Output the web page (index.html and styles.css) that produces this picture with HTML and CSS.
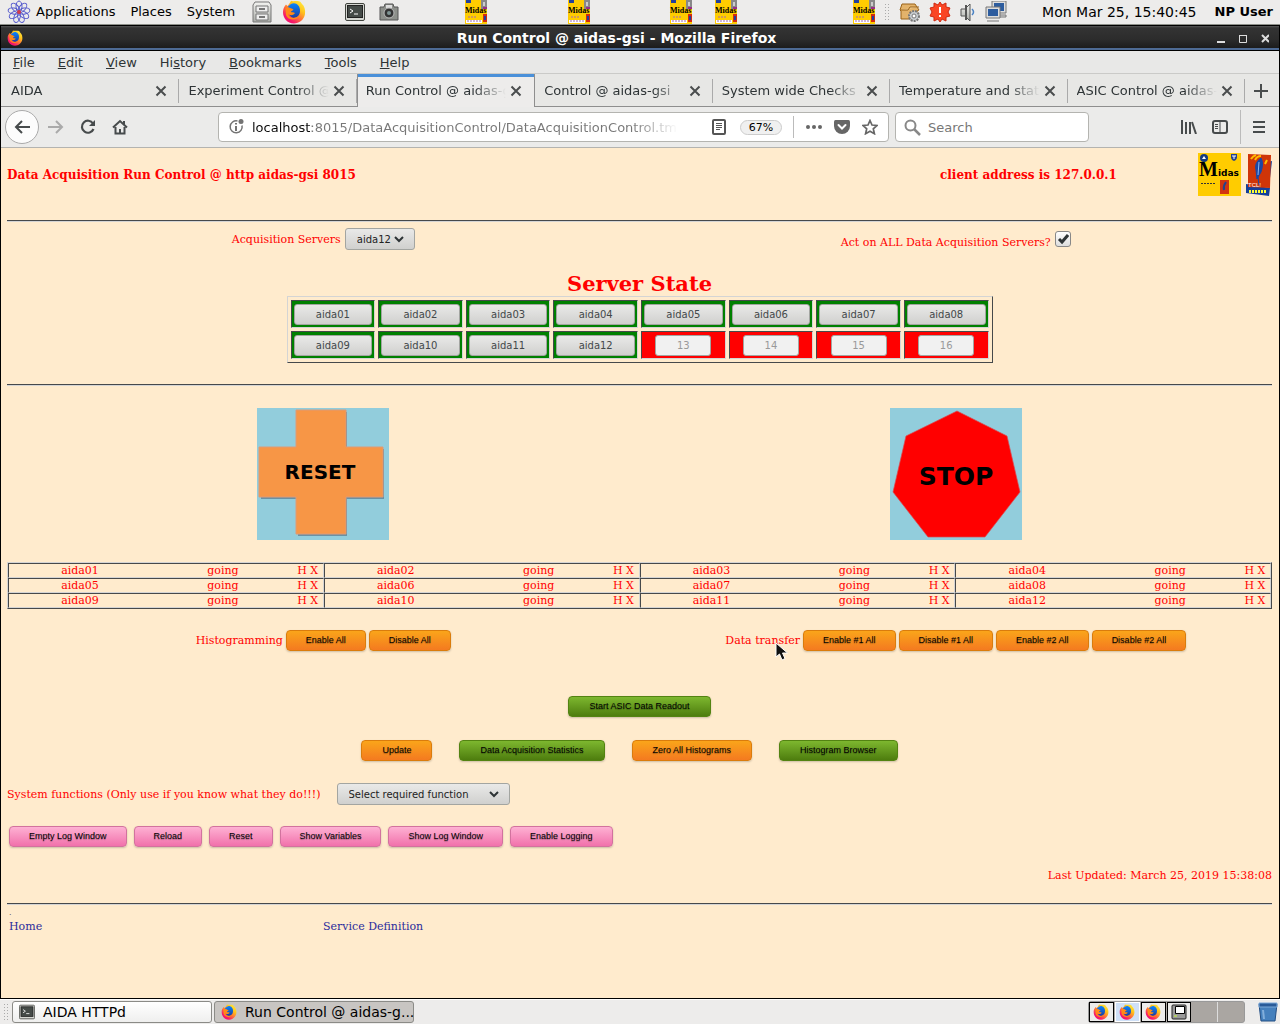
FILE: index.html
```html
<!DOCTYPE html>
<html lang="en">
<head>
<meta charset="utf-8">
<title>Run Control @ aidas-gsi</title>
<link rel="stylesheet" href="styles.css">
</head>
<body>
<svg class="defs" aria-hidden="true">
  <defs>
    <linearGradient id="flame" x1="1" y1="0" x2="0.2" y2="1">
      <stop offset="0" stop-color="#fff44f"/><stop offset="0.35" stop-color="#ffc51b"/>
      <stop offset="0.6" stop-color="#ff7139"/><stop offset="0.85" stop-color="#f5156c"/>
    </linearGradient>
    <linearGradient id="globe" x1="0" y1="0" x2="0" y2="1">
      <stop offset="0" stop-color="#0a84ff"/><stop offset="1" stop-color="#1b3f9c"/>
    </linearGradient>
    <linearGradient id="metal" x1="0" y1="0" x2="0" y2="1">
      <stop offset="0" stop-color="#f4f4f2"/><stop offset="1" stop-color="#a9aba6"/>
    </linearGradient>
    <symbol id="firefox" viewBox="0 0 24 24">
      <path d="M4 4.500L5.500 6C7 4.500 8 3 9 .8C11 2 16 0 18.500 2L20 4C22.500 6 23.500 10 23 14C22 20 17 23.500 12 23.500C5 23.500 1 18 1 12C1 9 2 7 4 4.500Z" fill="url(#flame)"/>
      <path d="M9 4C13 1.500 18.500 5 18 11C18 16 14 18.500 10.500 17.500C7.500 16.500 6.500 13 8 10.500L6 6.500Z" fill="url(#globe)"/>
      <path d="M3.500 8C7 6.500 9 8 11.500 9.500C11 11 9 10.500 9 12C10 12.500 11.500 12 13 13C11 16 7 15.500 6 13.500C7 19 14 19.500 17.500 15C16 21 6 21 4 15Z" fill="#ff8a16"/>
    </symbol>
    <symbol id="term" viewBox="0 0 20 18">
      <rect x=".5" y=".5" width="19" height="17" rx="1.500" fill="#d5d7d2" stroke="#41443f"/>
      <rect x="2.500" y="2.500" width="15" height="12" fill="#454b48" stroke="#222"/>
      <path d="M5 6l3 2-3 2M9 11h4" fill="none" stroke="#fff"/>
    </symbol>
    <symbol id="midas-mini" viewBox="0 0 24 24">
      <path fill="#fc0" d="M1 0h22v24H1z"/><path fill="#888" d="M17 0h6v9h-6z"/><path fill="#ccc" d="M19 2h2v4h-2z"/>
      <path fill="#24409c" d="M2 0h5v3H2z"/><path fill="#9b2c88" d="M19 7h4v2h-4z"/>
      <text x="1" y="13" class="mini-text">Midas</text>
      <path fill="#d32a10" d="M19 14h4v8h-4z"/><path fill="#24409c" d="M20 16h2v4h-2z"/>
      <path fill="#fff" d="M2 20h16v3H2z"/><path d="M3 21h14M4 17h8" stroke="#a26ab7" stroke-dasharray="2 1"/>
    </symbol>
    <symbol id="close" viewBox="0 0 12 12"><path d="M1.500 1.500l9 9m0-9l-9 9" stroke="#4a4d4e" stroke-width="2" fill="none"/></symbol>
  </defs>
</svg>

<header class="panel">
  <nav class="panel-menu">
    <svg width="24" height="24" viewBox="0 0 24 24"><g fill="none" stroke="#5358cc" stroke-width="1"><ellipse cx="12" cy="6.500" rx="3" ry="5.500"/><ellipse cx="12" cy="6.500" rx="3" ry="5.500" transform="rotate(40 12 12)"/><ellipse cx="12" cy="6.500" rx="3" ry="5.500" transform="rotate(80 12 12)"/><ellipse cx="12" cy="6.500" rx="3" ry="5.500" transform="rotate(120 12 12)"/><ellipse cx="12" cy="6.500" rx="3" ry="5.500" transform="rotate(160 12 12)"/><ellipse cx="12" cy="6.500" rx="3" ry="5.500" transform="rotate(200 12 12)"/><ellipse cx="12" cy="6.500" rx="3" ry="5.500" transform="rotate(240 12 12)"/><ellipse cx="12" cy="6.500" rx="3" ry="5.500" transform="rotate(280 12 12)"/><ellipse cx="12" cy="6.500" rx="3" ry="5.500" transform="rotate(320 12 12)"/></g><circle cx="12" cy="12" r="2" fill="#d23b4b"/></svg>
    <button>Applications</button><button>Places</button><button>System</button>
  </nav>
  <div class="launchers">
    <svg width="20" height="22" viewBox="0 0 20 22"><path d="M1 21V4l2-3h14l2 3v17z" fill="url(#metal)" stroke="#777"/><path d="M4 5h12v6H4zM4 13h12v6H4z" fill="#eee" stroke="#777"/><path d="M7 7h6v2H7zM7 15h6v2H7z" fill="#777"/></svg>
    <svg width="24" height="24"><use href="#firefox"/></svg>
  </div>
  <div class="launchers tools">
    <svg width="20" height="18"><use href="#term"/></svg>
    <svg width="20" height="18" viewBox="0 0 20 18"><path d="M1 4h4l1-3h8l1 3h4v13H1z" fill="#8d908b" stroke="#555"/><path d="M7 2h6v3H7z" fill="#ddd"/><circle cx="10" cy="10" r="5" fill="#333" stroke="#bbb"/><circle cx="10" cy="10" r="2" fill="#7e9393"/></svg>
  </div>
  <div class="applets">
    <svg width="24" height="24"><use href="#midas-mini"/></svg>
    <svg width="24" height="24"><use href="#midas-mini"/></svg>
    <span class="applet-pair"><svg width="24" height="24"><use href="#midas-mini"/></svg><svg width="24" height="24"><use href="#midas-mini"/></svg></span>
    <svg width="24" height="24"><use href="#midas-mini"/></svg>
  </div>
  <div class="tray">
    <i class="grip"></i>
    <svg width="23" height="22" viewBox="0 0 23 22"><path d="M2 9L4 3h13l4 6-2 1v8H3v-8z" fill="#e3b36b" stroke="#9a6319"/><path d="M2 9h8l2-3h9" stroke="#9a6319" fill="#f7deb0"/><circle cx="16" cy="15" r="5" fill="#c7ccd0" stroke="#777" stroke-width="2" stroke-dasharray="2 1"/><circle cx="16" cy="15" r="2" fill="#fff" stroke="#777"/></svg>
    <svg width="22" height="22" viewBox="0 0 22 22"><path d="M11 1l2 3 4-2v4l4 1-2 4 2 4-4 1v4l-4-2-2 3-2-3-4 2v-4l-4-1 2-4-2-4 4-1V2l4 2z" fill="#fa4624" stroke="#cf2a10"/><path d="M11 6v6M11 14v2" stroke="#fff" stroke-width="2"/></svg>
    <svg width="18" height="20" viewBox="0 0 18 20"><path d="M2 7h4l5-5v17l-5-5H2z" fill="url(#metal)" stroke="#555"/><path d="M7 3v15" stroke="#555" stroke-width="2"/><path d="M13 7q3 3 0 6" stroke="#4a82c4" fill="none" stroke-width="1.500"/></svg>
    <svg width="23" height="22" viewBox="0 0 23 22"><path d="M8 1h12v10H8z" fill="#2d5c9e" stroke="#ddd" stroke-width="2"/><path d="M7 0h14v12H7z" fill="none" stroke="#777"/><path d="M11 14h10v2H11z" fill="#ddd" stroke="#777"/><path d="M2 7h12v9H2z" fill="#2d5c9e" stroke="#ddd" stroke-width="2"/><path d="M1 6h14v11H1zM2 20h12" fill="none" stroke="#777"/></svg>
    <time>Mon Mar 25, 15:40:45</time>
    <b>NP User</b>
  </div>
</header>

<div class="window">
  <div class="titlebar">
    <svg width="16" height="16"><use href="#firefox"/></svg>
    <h1>Run Control @ aidas-gsi - Mozilla Firefox</h1>
    <div class="wm">
      <button aria-label="Minimize"><svg width="8" height="10"><path d="M0 9h8" stroke="#ddd" stroke-width="2"/></svg></button>
      <button aria-label="Maximize"><svg width="8" height="10"><path d="M0 2.500h8M.5 2v7.500h7V2" fill="none" stroke="#ddd"/></svg></button>
      <button aria-label="Close window"><svg width="8" height="10"><path d="M1 2l7 7m0-7L1 9" stroke="#ddd" stroke-width="2"/></svg></button>
    </div>
  </div>
  <nav class="menubar">
    <button><u>F</u>ile</button><button><u>E</u>dit</button><button><u>V</u>iew</button><button>Hi<u>s</u>tory</button><button><u>B</u>ookmarks</button><button><u>T</u>ools</button><button><u>H</u>elp</button>
  </nav>
  <div class="tabs">
    <div class="tab"><button class="tab-label">AIDA</button><button class="x" aria-label="Close tab"><svg width="12" height="12"><use href="#close"/></svg></button></div>
    <div class="tab"><button class="tab-label">Experiment Control @ aidas-gsi</button><button class="x" aria-label="Close tab"><svg width="12" height="12"><use href="#close"/></svg></button></div>
    <div class="tab active"><button class="tab-label">Run Control @ aidas-gsi</button><button class="x" aria-label="Close tab"><svg width="12" height="12"><use href="#close"/></svg></button></div>
    <div class="tab"><button class="tab-label">Control @ aidas-gsi</button><button class="x" aria-label="Close tab"><svg width="12" height="12"><use href="#close"/></svg></button></div>
    <div class="tab"><button class="tab-label">System wide Checks @ aidas</button><button class="x" aria-label="Close tab"><svg width="12" height="12"><use href="#close"/></svg></button></div>
    <div class="tab"><button class="tab-label">Temperature and status</button><button class="x" aria-label="Close tab"><svg width="12" height="12"><use href="#close"/></svg></button></div>
    <div class="tab"><button class="tab-label">ASIC Control @ aidas-gsi</button><button class="x" aria-label="Close tab"><svg width="12" height="12"><use href="#close"/></svg></button></div>
    <button class="new-tab" aria-label="New tab"><svg width="14" height="14"><path d="M7 0v14M0 7h14" stroke="#4a4d4e" stroke-width="2"/></svg></button>
  </div>
  <div class="toolbar">
    <div class="nav">
      <button class="back" aria-label="Back"><svg width="16" height="14" viewBox="0 0 16 14"><path d="M16 7H2M8 1L2 7l6 6" fill="none" stroke="#474b4c" stroke-width="2"/></svg></button>
      <button aria-label="Forward"><svg width="16" height="14" viewBox="0 0 16 14"><path d="M0 7h14M8 1l6 6-6 6" fill="none" stroke="#aaa" stroke-width="2"/></svg></button>
      <button aria-label="Reload page"><svg width="16" height="16" viewBox="0 0 16 16"><path d="M13 4.500A6 6 0 1 0 13.500 10" fill="none" stroke="#474b4c" stroke-width="2.200"/><path d="M15 1v6H9z" fill="#474b4c"/></svg></button>
      <button aria-label="Home page"><svg width="16" height="16" viewBox="0 0 16 16"><path d="M1 8.500L8 2l7 6.500M3.500 8v6.500h9V8" fill="none" stroke="#474b4c" stroke-width="2"/><path d="M11 2h2v4h-2zM7 10h2v4H7z" fill="#474b4c"/></svg></button>
    </div>
    <div class="urlbar">
      <svg width="16" height="16" viewBox="0 0 16 16"><path d="M9.500 2A6 6 0 1 0 14 6.500" fill="none" stroke="#737373" stroke-width="1.500"/><path d="M8 7v5M8 4v1.500" stroke="#737373" stroke-width="2"/><circle cx="13" cy="2.500" r="2.500" fill="#737373"/></svg>
      <input class="url" aria-label="Address" value="localhost:8015/DataAcquisitionControl/DataAcquisitionControl.tml">
      <svg class="reader" width="14" height="16" viewBox="0 0 14 16"><rect x="1" y="1" width="12" height="14" rx="1" fill="none" stroke="#555" stroke-width="2"/><path d="M4 4.500h6M4 6.500h6M4 8.500h6M4 10.500h4" stroke="#555"/></svg>
      <button class="zoom">67%</button>
      <i class="rule"></i>
      <svg width="16" height="4"><circle cx="2" cy="2" r="2" fill="#666"/><circle cx="8" cy="2" r="2" fill="#666"/><circle cx="14" cy="2" r="2" fill="#666"/></svg>
      <svg width="16" height="14" viewBox="0 0 16 14"><path d="M1.500 0h13Q16 0 16 2v4a8 8 0 0 1-16 0V2Q0 0 1.500 0z" fill="#666"/><path d="M4.500 5L8 8.500 11.500 5" fill="none" stroke="#fff" stroke-width="2" stroke-linecap="round"/></svg>
      <svg width="16" height="16" viewBox="0 0 16 16"><path d="M8 1.500l2 4.500 5 .5-3.700 3.300 1.100 4.900L8 12.200l-4.400 2.500 1.100-4.900L1 6.500 6 6z" fill="none" stroke="#666" stroke-width="1.700"/></svg>
    </div>
    <div class="search">
      <svg width="17" height="17" viewBox="0 0 17 17"><circle cx="6.500" cy="6.500" r="5" fill="none" stroke="#888" stroke-width="2"/><path d="M10 10l6 6" stroke="#888" stroke-width="2.500"/></svg>
      <input aria-label="Search" placeholder="Search">
    </div>
    <div class="extras">
      <button aria-label="Library"><svg width="16" height="14"><path d="M1 0v14M5 2v12M9 2v12M11 2l4 12" stroke="#474b4c" stroke-width="2"/></svg></button>
      <button aria-label="Sidebar"><svg width="16" height="14"><rect x="1" y="1" width="14" height="12" rx="2" fill="none" stroke="#474b4c" stroke-width="2"/><path d="M8 1v12M3 4.500h3M3 6.500h3M3 8.500h3" stroke="#474b4c"/></svg></button>
      <i class="rule"></i>
      <button aria-label="Menu"><svg width="12" height="12"><path d="M0 1h12M0 6h12M0 11h12" stroke="#474b4c" stroke-width="2"/></svg></button>
    </div>
  </div>

  <main class="page">
    <header class="page-head">
      <h2>Data Acquisition Run Control @ http aidas-gsi 8015</h2>
      <h2>client address is 127.0.0.1</h2>
      <div class="logos">
        <svg width="43" height="43" viewBox="0 0 43 43" role="img" aria-label="Midas"><path fill="#fc0" d="M0 0h43v43H0z"/><circle cx="6" cy="5" r="4" fill="#173a7e"/><path d="M4 6l2-3 2 3z" fill="#fff"/><path d="M33 1h6v4q-1 3-3 3t-3-3z" fill="#24438d"/><path d="M34 3h4M36 3v3" stroke="#fff"/><text x="1" y="23"><tspan class="m-big">M</tspan><tspan class="m-small">idas</tspan></text><path d="M3 30.500h14" stroke="#333" stroke-dasharray="2 1"/><path fill="#d23510" d="M22 27h9v14h-9z"/><path d="M28 29q-3 4-2 8" stroke="#24438d" stroke-width="2" fill="none"/></svg>
        <svg width="27" height="43" viewBox="0 0 27 43" role="img" aria-label="Tcl powered"><path fill="#143f9a" d="M1 31l24 4-1 8-23-3zM22 9l5-1-2 17z"/><path fill="#cf3508" d="M3 1l23 1-1 33L3 34z"/><path d="M6 6q2-3 5-4M10 7q2-4 6-4M20 11l2-4" stroke="#fb0" fill="none" stroke-width="2"/><path d="M16 5q-7 5-5 12l1 9 4-7q3-9 0-14zM13 24l1 8" fill="#1947a5" stroke="#1947a5"/><path d="M14 9l-1 13" stroke="#8db8f0"/><text x="3" y="34" class="tcl">TCL!</text><path d="M4 38.500h18" stroke="#ff3" stroke-width="3" stroke-dasharray="2 1"/></svg>
      </div>
    </header>
    <hr class="after-head">

    <div class="halves servers">
      <div class="pair"><label for="server">Acquisition Servers</label><select id="server" class="sel small"><option>aida12</option></select></div>
      <div class="pair"><label for="all" class="all-label">Act on ALL Data Acquisition Servers?</label><input type="checkbox" id="all" checked></div>
    </div>

    <table class="state">
      <caption>Server State</caption>
      <tr><td><button>aida01</button></td><td><button>aida02</button></td><td><button>aida03</button></td><td><button>aida04</button></td><td><button>aida05</button></td><td><button>aida06</button></td><td><button>aida07</button></td><td><button>aida08</button></td></tr>
      <tr><td><button>aida09</button></td><td><button>aida10</button></td><td><button>aida11</button></td><td><button>aida12</button></td><td class="off"><button disabled>13</button></td><td class="off"><button disabled>14</button></td><td class="off"><button disabled>15</button></td><td class="off"><button disabled>16</button></td></tr>
    </table>
    <hr class="after-state">

    <div class="halves signs">
      <button aria-label="Reset acquisition"><svg width="132" height="132" viewBox="0 0 132 132"><path fill="#92cddc" d="M0 0h132v132H0z"/><path d="M41 4h49v37h37v50H90v37H41V91H4V41h37z" fill="#6b91a3"/><path d="M39 2h50v37h37v50H89v37H39V89H2V39h37z" fill="#f79646" stroke="#dc9a78"/><text x="63" y="71" class="reset-text">RESET</text></svg></button>
      <button aria-label="Stop acquisition"><svg width="132" height="132" viewBox="0 0 132 132"><path fill="#92cddc" d="M0 0h132v132H0z"/><path d="M67 3l50 25 13 56-35 45H38L3 84l13-56z" fill="red" stroke="#d84a52" stroke-width=".7"/><text x="66" y="77" class="stop-text">STOP</text></svg></button>
    </div>

    <table class="status">
      <tr><td><div><span>aida01</span><span>going</span><span>H X</span></div></td><td><div><span>aida02</span><span>going</span><span>H X</span></div></td><td><div><span>aida03</span><span>going</span><span>H X</span></div></td><td><div><span>aida04</span><span>going</span><span>H X</span></div></td></tr>
      <tr><td><div><span>aida05</span><span>going</span><span>H X</span></div></td><td><div><span>aida06</span><span>going</span><span>H X</span></div></td><td><div><span>aida07</span><span>going</span><span>H X</span></div></td><td><div><span>aida08</span><span>going</span><span>H X</span></div></td></tr>
      <tr><td><div><span>aida09</span><span>going</span><span>H X</span></div></td><td><div><span>aida10</span><span>going</span><span>H X</span></div></td><td><div><span>aida11</span><span>going</span><span>H X</span></div></td><td><div><span>aida12</span><span>going</span><span>H X</span></div></td></tr>
    </table>

    <div class="halves transfer">
      <div class="pair tight"><span>Histogramming</span><button class="btn orange">Enable All</button><button class="btn orange">Disable All</button></div>
      <div class="pair tight"><span class="pointed">Data transfer<svg class="cursor" width="14" height="19" viewBox="0 0 14 19"><path d="M1 1v14l3.500-3 2.500 6 3-1.500-2.500-5.500h5z" fill="#111" stroke="#fff"/></svg></span><button class="btn orange">Enable #1 All</button><button class="btn orange">Disable #1 All</button><button class="btn orange">Enable #2 All</button><button class="btn orange">Disable #2 All</button></div>
    </div>

    <div class="center start"><button class="btn green">Start ASIC Data Readout</button></div>
    <div class="center actions"><button class="btn orange">Update</button><button class="btn green">Data Acquisition Statistics</button><button class="btn orange">Zero All Histograms</button><button class="btn green">Histogram Browser</button></div>

    <div class="functions"><label for="fn">System functions (Only use if you know what they do!!!)</label><select id="fn" class="sel wide"><option>Select required function</option></select></div>
    <div class="log-tools"><button class="btn pink">Empty Log Window</button><button class="btn pink">Reload</button><button class="btn pink">Reset</button><button class="btn pink">Show Variables</button><button class="btn pink">Show Log Window</button><button class="btn pink">Enable Logging</button></div>
    <p class="updated">Last Updated: March 25, 2019 15:38:08</p>
    <hr class="after-updated">
    <p class="dot">.</p>
    <nav class="links"><a href="#home">Home</a><a href="#service">Service Definition</a></nav>
  </main>
</div>

<footer class="taskbar">
  <i class="grip"></i>
  <button class="task"><svg width="16" height="16"><use href="#term"/></svg>AIDA HTTPd</button>
  <button class="task current"><svg width="16" height="16"><use href="#firefox"/></svg>Run Control @ aidas-g...</button>
  <div class="pager">
    <span class="win"><svg width="16" height="16"><use href="#firefox"/></svg></span>
    <span class="win here"><svg width="16" height="16"><use href="#firefox"/></svg></span>
    <span class="win"><svg width="16" height="16"><use href="#firefox"/></svg></span>
    <span class="win"><svg width="16" height="16" viewBox="0 0 16 16"><rect x="1" y="1" width="14" height="14" rx="1" fill="#999" stroke="#222"/><path d="M4.500 2.500h9v7h-9z" fill="#fff" stroke="#000"/><path d="M3 12h3" stroke="#cf3"/></svg></span>
    <span></span><span></span>
  </div>
  <svg class="trash" width="20" height="20" viewBox="0 0 20 20"><path d="M1 2h18l-2 17H3z" fill="#4580bd" stroke="#234e83"/><path d="M1 1h18v4H1z" fill="#285a98" stroke="#7aa8d8"/><path d="M5 8l1 9" stroke="#82aedb" stroke-width="2"/></svg>
</footer>
</body>
</html>
```

FILE: styles.css
```css
* { box-sizing: border-box; }
body {
  margin: 0;
  min-height: 100vh;
  display: flex;
  flex-direction: column;
  background: #edeceb;
  font: 13px/16px "DejaVu Sans", sans-serif;
  color: #2e3436;
}
button, input, select { font: inherit; color: inherit; margin: 0; }
button { padding: 0; border: 0; background: none; white-space: nowrap; }
svg { display: block; flex: none; }
.defs { position: absolute; width: 0; height: 0; }

/* desktop panel */
.panel {
  display: flex;
  align-items: center;
  height: 25px;
  border-bottom: 1px solid #8d8f89;
  overflow: hidden;
  color: #000;
}
.panel-menu { display: flex; align-items: center; gap: 15px; padding-left: 7px; }
.panel-menu svg { margin-right: -10px; }
.launchers { display: flex; align-items: center; gap: 10px; margin-left: 17px; }
.launchers.tools { gap: 14px; margin-left: 39px; }
.applets { display: flex; flex: none; width: 412px; margin-left: auto; justify-content: space-between; }
.applet-pair { display: flex; gap: 21px; padding-right: 35px; }
.mini-text { font: bold 8px "Liberation Serif", serif; fill: #000; }
.tray { display: flex; align-items: center; gap: 8px; margin-left: 8px; padding-right: 7px; }
.tray time { font-size: 14px; margin-left: 26px; white-space: nowrap; }
.tray b { margin-left: 10px; white-space: nowrap; }
.grip {
  width: 6px;
  height: 18px;
  background: radial-gradient(#aaa 1px, transparent 1px) 0 0 / 3px 3px;
}

/* browser window */
.window {
  flex: 1;
  display: flex;
  flex-direction: column;
  border: 1px solid #000;
}
.titlebar {
  display: flex;
  align-items: center;
  height: 25px;
  padding: 0 10px 0 6px;
  background: linear-gradient(#555 0, #333 2px, #2c2c2c 55%, #1c1c1c 92%, #4d6a94 93%);
  border-bottom: 1px solid #000;
}
.titlebar h1 { flex: 1; margin: 0; padding-right: 7px; text-align: center; font-size: 14px; color: #fff; }
.wm { display: flex; gap: 14px; }
.menubar { display: flex; gap: 23px; align-items: center; height: 22px; padding: 1px 0 0 12px; background: #e8e8e7; }
.tabs { display: flex; height: 34px; padding: 0 1px; border-top: 1px solid #cacac8; background: #e7e7e5; box-shadow: inset 0 -1px #8e8e8e; }
.tab {
  flex: 1 1 0;
  min-width: 0;
  display: flex;
  align-items: center;
  padding: 0 12px 0 9px;
  background: linear-gradient(#aaa, #aaa) right center / 1px 24px no-repeat;
}
.tab-label { flex: 1; min-width: 0; overflow: hidden; text-align: left; mask-image: linear-gradient(90deg, #000 calc(100% - 32px), transparent); }
.tab.active { padding-left: 8px; background: #edeceb; border: solid #8e8e8e; border-width: 0 1px; box-shadow: inset 0 3px #4a90d9; }
.x { margin-left: 4px; }
.new-tab { width: 33px; display: flex; justify-content: center; align-items: center; }
.toolbar {
  display: flex;
  align-items: center;
  height: 41px;
  background: #ebebea;
  border-bottom: 1px solid #b3b3b0;
}
.nav { display: flex; align-items: center; gap: 16px; padding-left: 4px; width: 217px; }
.nav .back { display: grid; place-items: center; width: 34px; height: 34px; margin-right: -7px; border: 1px solid #aaa; border-radius: 50%; background: #fcfcfc; }
.urlbar, .search { display: flex; align-items: center; height: 30px; border: 1px solid #b4b4b0; border-radius: 4px; background: #fff; }
.urlbar { flex: 1; gap: 12px; padding: 0 10px 0 9px; }
.urlbar input, .search input { min-width: 0; padding: 1px 0 0; border: 0; outline: 0; background: none; }
.url { width: 426px; margin-left: -4px; }
.urlbar .url {
  background: linear-gradient(90deg, #0c0c0c 60px, #777 60px, #777 380px, transparent) text;
  -webkit-text-fill-color: transparent;
}
.reader { margin: 0 2px 0 auto; }
.zoom { width: 42px; height: 15px; margin-right: -1px; border: 1px solid #ccc; border-radius: 8px; background: #f0f0f0; font-size: 11px; line-height: 13px; color: #000; }
.rule { width: 1px; height: 22px; background: #bbb; }
.search { width: 194px; gap: 7px; margin-left: 6px; padding-left: 8px; }
.search input { width: 140px; }
.search input::placeholder { color: #777; }
.extras { display: flex; align-items: center; gap: 15px; margin-left: 92px; padding-right: 14px; }
.extras .rule { height: 34px; margin: 0 -3px; }

/* run control page */
.page {
  flex: 1;
  padding: 5px 7px 8px 6px;
  background: #ffebcd;
  color: #f00;
  font: 11px/13px "DejaVu Serif", serif;
}
hr { height: 2px; margin: 0; border: 0; border-top: 1px solid #46494b; border-bottom: 1px solid #d4d4d4; }
.page p { margin: 0; }
.page-head { display: grid; grid-template-columns: 1fr 258px 74px; align-items: center; }
.page-head h2 { margin: 0; font-size: 12px; line-height: 16px; }
.logos { display: flex; justify-content: space-between; }
.m-big { font: bold 20px "Liberation Serif", serif; }
.m-small { font: bold 9px "DejaVu Sans", sans-serif; }
.tcl { font: 6px "Liberation Sans", sans-serif; fill: #fff; }
.after-head { margin-top: 24px; }
.halves { display: grid; grid-template-columns: 1fr 1fr; justify-items: center; }
.pair { display: flex; align-items: center; gap: 4px; }
.pair.tight { gap: 3px; }
.servers { margin-top: 6px; }
.all-label { padding-top: 6px; }
.sel {
  appearance: none;
  height: 22px;
  padding: 0 11px;
  border: 1px solid #a3a5a1;
  border-radius: 3px;
  background: url("data:image/svg+xml,%3Csvg xmlns='http://www.w3.org/2000/svg' width='10' height='7'%3E%3Cpath d='M1 1l4 4 4-4' fill='none' stroke='%232e3436' stroke-width='2'/%3E%3C/svg%3E") right 10px center no-repeat, linear-gradient(#e9e9e8, #d0d0ce);
  color: #222;
  font: 10px "DejaVu Sans", sans-serif;
}
.sel.small { width: 70px; }
.sel.wide { width: 173px; }
input[type="checkbox"] {
  appearance: none;
  width: 16px;
  height: 16px;
  border: 1px solid #888;
  border-radius: 3px;
  background: url("data:image/svg+xml,%3Csvg xmlns='http://www.w3.org/2000/svg' width='12' height='11'%3E%3Cpath d='M2 5l3 3 6-7' fill='none' stroke='%232e3436' stroke-width='3'/%3E%3C/svg%3E") center no-repeat, linear-gradient(#fff, #ddd);
}
.state { width: 706px; margin: 21px auto 0; table-layout: fixed; border-spacing: 3px; border: 1px solid; border-color: #d4d4d4 #46494b #46494b #d4d4d4; }
.state caption { font-size: 21px; line-height: 25px; font-weight: bold; }
.state td { padding: 3px 2px 2px; border: 1px solid; border-color: #46494b #d4d4d4 #d4d4d4 #46494b; background: #008000; text-align: center; }
.state td.off { background: #f00; }
.state button {
  display: block;
  width: 100%;
  height: 21px;
  padding-bottom: 1px;
  border: 1px solid #a3a5a1;
  border-radius: 3px;
  background: linear-gradient(#e9e9e8, #d0d0ce);
  color: #43484a;
  font: 10px "DejaVu Sans", sans-serif;
}
.state .off button { width: 56px; margin: 0 auto; background: #f1f1f1; color: #999; }
.after-state { margin-top: 21px; }
.signs { margin-top: 22px; }
.reset-text, .stop-text { font: bold 20px "DejaVu Sans", sans-serif; text-anchor: middle; fill: #000; }
.stop-text { font-size: 25px; }
.status { width: 100%; margin-top: 22px; table-layout: fixed; border-spacing: 0; border: 1px solid; border-color: #d4d4d4 #46494b #46494b #d4d4d4; }
.status td { padding: 0; border: 1px solid; border-color: #46494b #d4d4d4 #d4d4d4 #46494b; }
.status div { display: grid; grid-template-columns: 142px 1fr 26px; text-align: center; padding-right: 2px; }
.transfer { margin-top: 21px; }
.btn {
  height: 21px;
  padding: 0 19px 1px;
  border: 1px solid;
  border-radius: 4px;
  box-shadow: 0 1px 2px rgba(0, 0, 0, .2);
  font: 9px "Liberation Sans", sans-serif;
  color: #000;
  text-shadow: 0 1px 1px rgba(0, 0, 0, .3);
}
.orange { border-color: #da7c0c; background: linear-gradient(#faa51a, #f47a20); }
.green { border-color: #538312; background: linear-gradient(#7db72f, #4e7d0e); }
.pink { border-color: #d2729e; background: linear-gradient(#feb1d3, #f171ab); }
.pointed { position: relative; }
.cursor { position: absolute; left: 50px; top: 8px; }
.center { display: flex; justify-content: center; }
.center .btn { padding: 0 20px 1px; }
.start { margin-top: 45px; }
.actions { gap: 27px; margin-top: 23px; padding-right: 20px; }
.functions { display: flex; align-items: center; gap: 16px; margin-top: 22px; }
.log-tools { display: flex; gap: 7px; margin-top: 21px; padding-left: 2px; }
.page .updated { margin-top: 22px; text-align: right; }
.after-updated { margin-top: 21px; }
.dot { font-size: 8px; color: #333; line-height: 15px; padding-left: 2px; }
.links { display: grid; grid-template-columns: 314px 1fr; padding-left: 2px; }
.links a { color: #2a2a9c; text-decoration: none; }

/* desktop task list */
.taskbar { display: flex; align-items: center; gap: 2px; height: 25px; padding: 0 2px 0 3px; border-top: 1px solid #fff; color: #000; }
.taskbar .grip { margin-right: 1px; }
.task { display: flex; align-items: center; gap: 8px; width: 200px; height: 22px; padding: 0 6px; border: 1px solid #8b8b87; border-radius: 3px; background: linear-gradient(#fff, #efefee); font-size: 14px; }
.task.current { background: #c8c5c2; }
.pager { display: grid; grid-template-columns: repeat(6, 1fr); width: 157px; height: 22px; margin-left: auto; border: 1px solid #999; border-radius: 3px; background: #aaa6a2; }
.pager span { display: grid; place-items: center; border-right: 1px solid #ddd; }
.pager span:last-child { border: 0; }
.pager .win { border: 1px solid #000; background: #edeceb; margin-right: 1px; }
.pager .here { border-color: #fff; background: #cfe0f7; }
.trash { margin-left: 11px; }
```
